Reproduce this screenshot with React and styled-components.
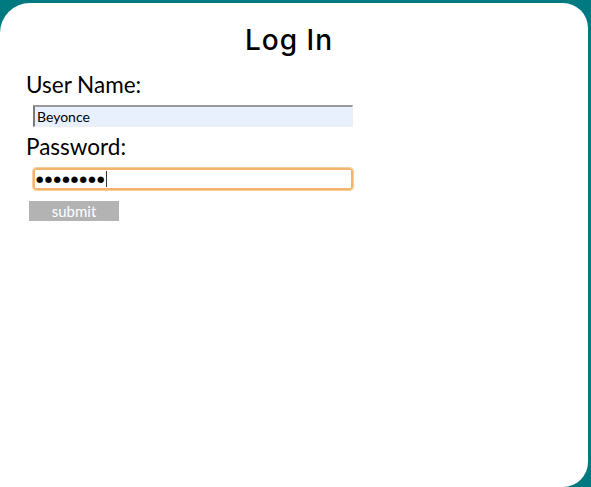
import React from "react";
import styled, { createGlobalStyle } from "styled-components";

const GlobalStyle = createGlobalStyle`
  html, body {
    margin: 0;
    padding: 0;
    background: #007a80;
    height: 487px;
    overflow: hidden;
  }
  #root { height: 100%; }
`;

const Card = styled.main`
  box-sizing: border-box;
  margin: 3px 3px 0 0;
  height: 484px;
  background: #ffffff;
  border-radius: 30px 25px 25px 0;
  padding: 20px 0 0 26px;
  display: flex;
  flex-direction: column;
  align-items: flex-start;
  font-family: Lato, "Liberation Sans", sans-serif;
`;

const Title = styled.h1`
  align-self: stretch;
  margin: 0 10px 15px -26px;
  text-align: center;
  font-family: Inter, "DejaVu Sans", sans-serif;
  font-weight: 500;
  font-size: 28px;
  letter-spacing: 1px;
  line-height: 34px;
  color: #000;
`;

const Label = styled.label`
  display: block;
  font-size: 22.5px;
  line-height: 26px;
  color: #000;
  margin: 0 0 ${(p) => p.$gap}px 0;
`;

const Field = styled.div`
  box-sizing: border-box;
  width: 320px;
  height: 22px;
  margin-left: 7px;
  display: flex;
  align-items: center;
  font-size: 14px;
  color: #000;
  padding-left: 2px;
`;

const TextField = styled(Field)`
  background: #e8f0fe;
  border-top: 2px solid #9a9a9a;
  border-left: 2px solid #7a7a7a;
  border-right: 1px solid #eeeeee;
  border-bottom: 1px solid #eeeeee;
  margin-bottom: 7px;
`;

const PasswordField = styled(Field)`
  background: #ffffff;
  border: 2px solid #f4b46e;
  border-radius: 3px;
  outline: 1px solid #f7cf9f;
  outline-offset: 0;
  margin-bottom: 11px;
  padding-left: 1px;
`;

const Dots = styled.span`
  font-family: "DejaVu Sans", sans-serif;
  font-size: 8.5px;
  letter-spacing: 1.3px;
  line-height: 1;
`;

const Caret = styled.span`
  display: inline-block;
  width: 1px;
  height: 16px;
  background: #333;
  margin-left: 0;
`;

const Submit = styled.button`
  width: 90px;
  height: 20px;
  margin-left: 3px;
  padding: 0;
  border: none;
  background: #b3b3b3;
  color: #ffffff;
  font-family: Lato, "Liberation Sans", sans-serif;
  font-size: 15px;
  line-height: 20px;
  text-align: center;
`;

export default function App() {
  return (
    <>
      <GlobalStyle />
      <Card>
        <Title>Log In</Title>
        <Label $gap={7}>User Name:</Label>
        <TextField>Beyonce</TextField>
        <Label $gap={8}>Password:</Label>
        <PasswordField>
          <Dots>●●●●●●●●</Dots>
          <Caret />
        </PasswordField>
        <Submit>submit</Submit>
      </Card>
    </>
  );
}
